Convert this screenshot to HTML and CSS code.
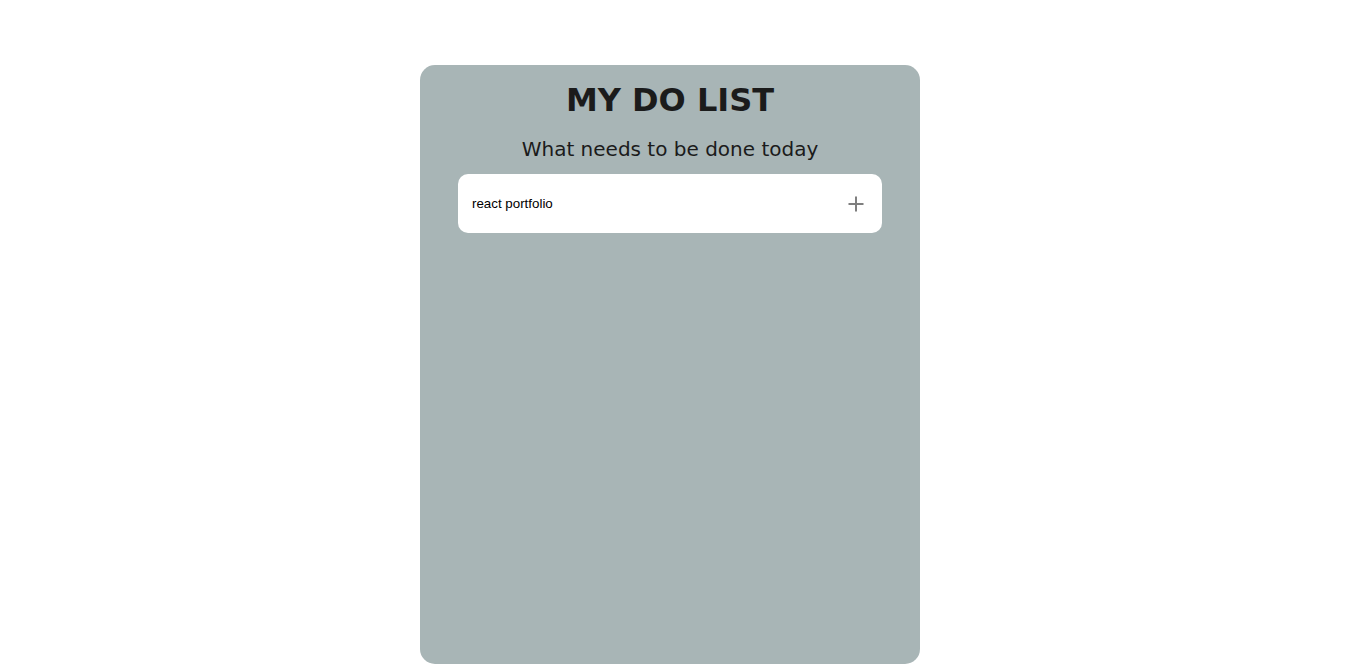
FILE: index.html
```html
<!DOCTYPE html>
<html lang="en">
<head>
<meta charset="utf-8">
<title>My Do List</title>
<link rel="stylesheet" href="styles.css">
</head>
<body>
<main class="app">
  <h1 class="title">MY DO LIST</h1>
  <h2 class="subtitle">What needs to be done today</h2>
  <form class="entry">
    <input class="entry-input" type="text" value="react portfolio">
    <button class="entry-add" type="button" aria-label="Add">
      <svg width="16" height="16" viewBox="0 0 16 16"><path d="M8 0.5v15M0.5 8h15" stroke="#7f7f7f" stroke-width="2" fill="none"/></svg>
    </button>
  </form>
</main>
</body>
</html>
```
FILE: styles.css
```css
html, body {
  margin: 0;
  padding: 0;
  background: #ffffff;
}
body {
  font-family: "DejaVu Sans", Verdana, sans-serif;
  padding-top: 65px;
}
.app {
  width: 500px;
  height: 599px;
  margin: 0 0 0 420px;
  background: #a8b5b6;
  border-radius: 15px;
  box-sizing: border-box;
  padding: 14px 38px 0;
  display: flex;
  flex-direction: column;
  align-items: center;
}
.title {
  margin: 0;
  font-size: 32px;
  font-weight: bold;
  color: #1b1b1b;
  line-height: 42px;
}
.subtitle {
  margin: 14px 0 0;
  font-size: 20px;
  font-weight: normal;
  color: #1b1b1b;
  line-height: 28px;
}
.entry {
  margin-top: 11px;
  width: 100%;
  height: 59px;
  background: #ffffff;
  border-radius: 10px;
  display: flex;
  align-items: center;
  padding: 0 14px;
  box-sizing: border-box;
}
.entry-input {
  flex: 1;
  border: none;
  outline: none;
  background: transparent;
  font-family: "Liberation Sans", Arial, sans-serif;
  font-size: 13.33px;
  color: #000;
  padding: 0;
}
.entry-add {
  border: none;
  background: transparent;
  padding: 0;
  width: 16px;
  height: 16px;
  display: flex;
  margin-right: 4px;
}
```
